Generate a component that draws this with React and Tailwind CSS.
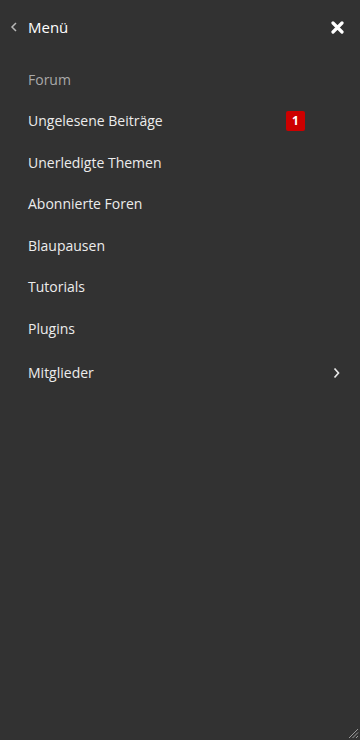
import React from 'react'

const items = [
  { label: 'Ungelesene Beiträge', badge: 1 },
  { label: 'Unerledigte Themen' },
  { label: 'Abonnierte Foren' },
  { label: 'Blaupausen' },
  { label: 'Tutorials' },
  { label: 'Plugins' },
]

export default function App() {
  return (
    <div className="relative min-h-[740px] w-[360px] bg-[#323232] text-[#ececec] text-[14px] leading-5" style={{ fontFamily: '"Open Sans", "Noto Sans", sans-serif' }}>
      <div className="flex h-[54px] items-center">
        <svg className="ml-[10px] h-[10px] w-[7px]" viewBox="0 0 7 10" fill="none">
          <path d="M6 1L2 5l4 4" stroke="#b8b8b8" strokeWidth="1.5" />
        </svg>
        <span className="ml-[11px] text-[15px] text-white">Menü</span>
        <svg className="ml-auto mr-[16px] h-[13px] w-[13px]" viewBox="0 0 13 13" fill="none">
          <path d="M2 2l9 9M11 2l-9 9" stroke="#fff" strokeWidth="3.2" strokeLinecap="round" />
        </svg>
      </div>
      <div className="pt-[5px]">
        <div className="flex h-[41.5px] items-center pl-[28px] text-[#a9a9a9]">Forum</div>
        {items.map((it) => (
          <div key={it.label} className="flex h-[41.5px] items-center pl-[28px] pr-[55px]">
            <span>{it.label}</span>
            {it.badge && (
              <span className="ml-auto flex h-[20px] w-[19px] items-center justify-center rounded-[2px] bg-[#cc0000] text-[12px] font-bold text-white">
                {it.badge}
              </span>
            )}
          </div>
        ))}
        <div className="flex h-[46px] items-center pl-[28px] pr-[20px]">
          <span>Mitglieder</span>
          <svg className="ml-auto h-[12px] w-[7px]" viewBox="0 0 7 12" fill="none">
            <path d="M1.5 1.5l4 4.5-4 4.5" stroke="#e8e8e8" strokeWidth="1.7" />
          </svg>
        </div>
      </div>
      <svg className="absolute bottom-[1px] right-[1px] h-[11px] w-[11px]" viewBox="0 0 11 11" fill="none">
        <path d="M10 1L1 10M10 4.5L4.5 10M10 8L8 10" stroke="#9a9a9a" strokeWidth="1" />
      </svg>
    </div>
  )
}
